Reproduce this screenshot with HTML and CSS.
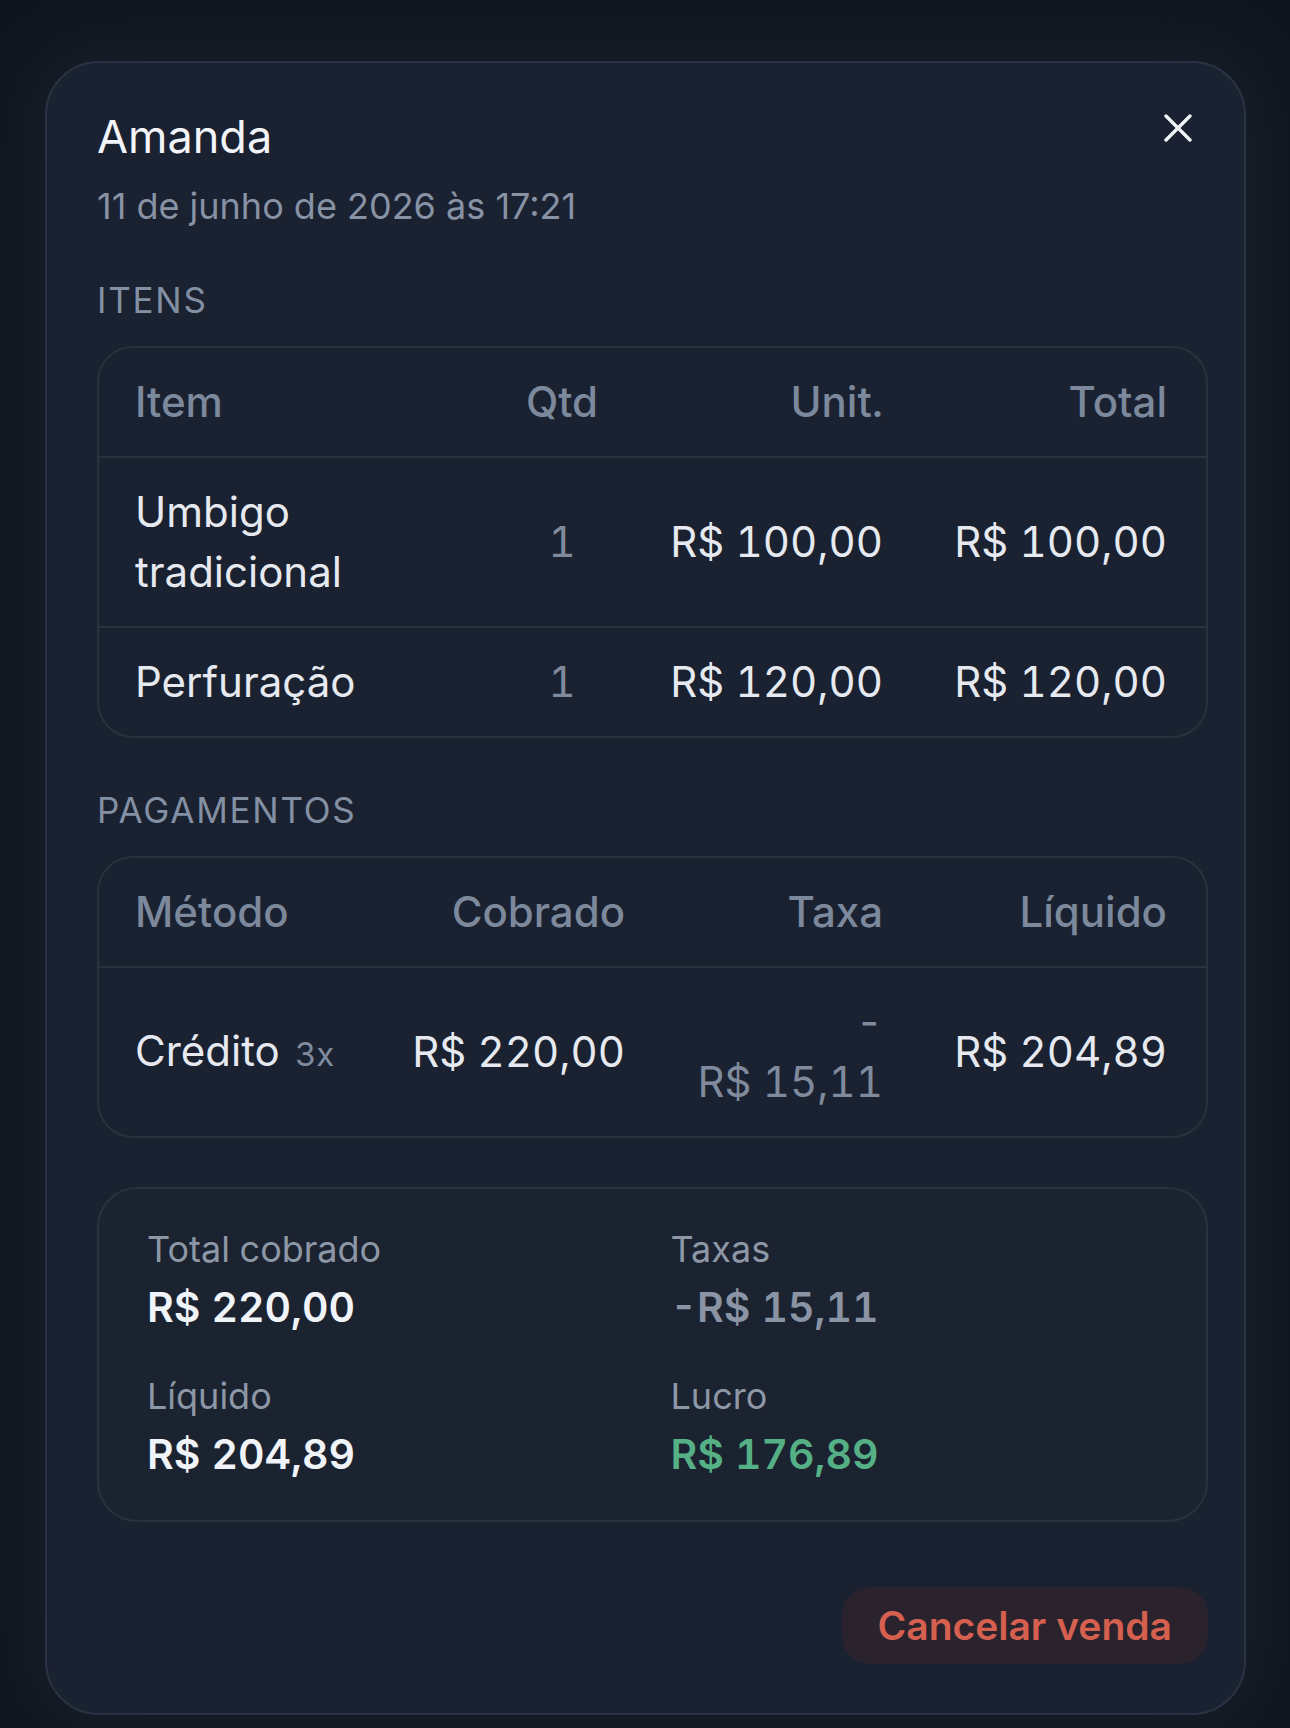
FILE: index.html
```html
<!DOCTYPE html>
<html lang="pt-BR">
<head>
    <meta charset="UTF-8">
    <meta name="viewport" content="width=device-width, initial-scale=1.0">
    <title>Detalhes da venda</title>
    <link rel="stylesheet" href="styles.css">
</head>
<body>

<div class="modal">
    <div class="modal-header">
        <div>
            <div class="modal-title">Amanda</div>
            <div class="modal-date">11 de junho de 2026 às 17:21</div>
        </div>
        <button class="close-btn" aria-label="Fechar">
            <svg width="28" height="28" viewBox="0 0 28 28">
                <path d="M2 2 L26 26 M26 2 L2 26" stroke="#f2f4f8" stroke-width="3.4" stroke-linecap="round" fill="none"/>
            </svg>
        </button>
    </div>

    <div class="modal-body">
        <div class="section-label">ITENS</div>
        <div class="data-box items">
            <div class="data-row head">
                <div>Item</div>
                <div class="center">Qtd</div>
                <div class="right">Unit.</div>
                <div class="right">Total</div>
            </div>
            <div class="data-row">
                <div class="item-name">Umbigo tradicional</div>
                <div class="center muted">1</div>
                <div class="right">R$ 100,00</div>
                <div class="right">R$ 100,00</div>
            </div>
            <div class="data-row">
                <div class="item-name">Perfuração</div>
                <div class="center muted">1</div>
                <div class="right">R$ 120,00</div>
                <div class="right">R$ 120,00</div>
            </div>
        </div>

        <div class="section-label">PAGAMENTOS</div>
        <div class="data-box payments">
            <div class="data-row head">
                <div>Método</div>
                <div class="right">Cobrado</div>
                <div class="right">Taxa</div>
                <div class="right">Líquido</div>
            </div>
            <div class="data-row">
                <div>Crédito <span class="installments">3x</span></div>
                <div class="right">R$ 220,00</div>
                <div class="right muted">-<br>R$ 15,11</div>
                <div class="right">R$ 204,89</div>
            </div>
        </div>

        <div class="summary">
            <div class="summary-item">
                <div class="summary-label">Total cobrado</div>
                <div class="summary-value">R$ 220,00</div>
            </div>
            <div class="summary-item">
                <div class="summary-label">Taxas</div>
                <div class="summary-value fee">-R$ 15,11</div>
            </div>
            <div class="summary-item">
                <div class="summary-label">Líquido</div>
                <div class="summary-value">R$ 204,89</div>
            </div>
            <div class="summary-item">
                <div class="summary-label">Lucro</div>
                <div class="summary-value profit">R$ 176,89</div>
            </div>
        </div>

        <div class="modal-actions">
            <button class="cancel-btn">Cancelar venda</button>
        </div>
    </div>
</div>

</body>
</html>
```

FILE: styles.css
```css
/* Pagina / fundo escuro */
body {
    margin: 0;
    background-color: #10161e;
    font-family: Inter, "Noto Sans", sans-serif;
    font-variant-numeric: tabular-nums;
    color: #e6eaf0;
}

/* Cartao do modal */
.modal {
    margin: 61px 44px 13px 45px;
    background-color: #1a2130;
    border: 2px solid #2a3342;
    border-radius: 54px;
    padding: 44px 36px 49px 50px;
    box-shadow: 0 0 70px 12px rgba(28, 36, 50, 0.75);
}

.modal-header {
    display: flex;
    justify-content: space-between;
    align-items: flex-start;
}

.modal-title {
    font-size: 45px;
    line-height: 60px;
    color: #f2f4f8;
}

.modal-date {
    margin-top: 15px;
    font-size: 36px;
    line-height: 48px;
    color: #8792a4;
    font-variant-numeric: normal;
}

.close-btn {
    background: none;
    border: none;
    padding: 0;
    margin: 7px 16px 0 0;
    width: 28px;
    height: 28px;
    cursor: pointer;
}

/* Titulos de secao */
.section-label {
    margin-top: 48px;
    margin-bottom: 24px;
    font-size: 35px;
    line-height: 44px;
    letter-spacing: 0.05em;
    color: #8390a3;
}

/* Tabelas */
.data-box {
    border: 2px solid #28323f;
    border-radius: 36px;
    overflow: hidden;
}

.data-box + .section-label {
    margin-top: 50px;
}

.data-row {
    display: grid;
    align-items: center;
    padding: 24px 39px 24px 36px;
    font-size: 42px;
    line-height: 60px;
    color: #e6eaf0;
    border-top: 2px solid #28323f;
}

.data-row:first-child {
    border-top: none;
}

.items .data-row {
    grid-template-columns: 1fr 122px 260px 284px;
}

.payments .data-row {
    grid-template-columns: 1fr 250px 258px 284px;
}

.data-row.head {
    color: #7c889b;
    font-weight: 500;
}

.item-name {
    max-width: 300px;
}

.center {
    text-align: center;
}

.right {
    text-align: right;
}

.muted {
    color: #7f8b9d;
}

.installments {
    margin-left: 4px;
    font-size: 33px;
    color: #7f8b9d;
}

/* Resumo */
.summary {
    margin-top: 49px;
    display: grid;
    grid-template-columns: 1fr 1fr;
    column-gap: 36px;
    row-gap: 35px;
    padding: 36px 48px;
    background-color: #1b2331;
    border: 2px solid #28323f;
    border-radius: 40px;
}

.summary-label {
    font-size: 36px;
    line-height: 48px;
    color: #8d97a6;
}

.summary-value {
    margin-top: 4px;
    font-size: 41px;
    line-height: 60px;
    font-weight: 600;
    color: #f0f3f7;
}

.summary-value.fee {
    color: #8a94a5;
}

.summary-value.profit {
    color: #56b086;
}

/* Acoes */
.modal-actions {
    margin-top: 65px;
    display: flex;
    justify-content: flex-end;
}

.cancel-btn {
    background-color: #2a232d;
    color: #d6604f;
    border: none;
    border-radius: 28px;
    padding: 14px 36px;
    font-family: Inter, "Noto Sans", sans-serif;
    font-size: 39px;
    line-height: 49px;
    font-weight: 600;
    cursor: pointer;
}
```
